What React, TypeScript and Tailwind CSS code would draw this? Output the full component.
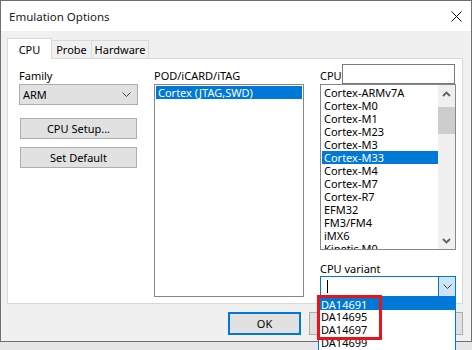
import React from "react";

const font = { fontFamily: '"Noto Sans", "Liberation Sans", sans-serif' };

function Chevron({ className = "" }: { className?: string }) {
  return (
    <svg width="9" height="5" viewBox="0 0 9 5" className={className}>
      <path d="M0.5 0.5 L4.5 4.5 L8.5 0.5" fill="none" stroke="#404040" strokeWidth="1" />
    </svg>
  );
}

function ScrollArrow({ up }: { up?: boolean }) {
  return (
    <svg width="9" height="6" viewBox="0 0 9 6">
      <path
        d={up ? "M1 5 L4.5 1.5 L8 5" : "M1 1 L4.5 4.5 L8 1"}
        fill="none"
        stroke="#606060"
        strokeWidth="1.8"
      />
    </svg>
  );
}

const cpus = [
  "Cortex-ARMv7A",
  "Cortex-M0",
  "Cortex-M1",
  "Cortex-M23",
  "Cortex-M3",
  "Cortex-M33",
  "Cortex-M4",
  "Cortex-M7",
  "Cortex-R7",
  "EFM32",
  "FM3/FM4",
  "iMX6",
  "Kinetis M0",
];

const variants = ["DA14691", "DA14695", "DA14697", "DA14699"];

export default function App() {
  return (
    <div
      className="relative w-[472px] h-[350px] overflow-hidden bg-[#e6e6e6] text-[11px] text-black leading-[13px]"
      style={font}
    >
      <div className="w-[472px] h-[342px] border border-[#6f6f6f] bg-[#f0f0f0] flex flex-col">
        {/* title bar */}
        <div className="h-[30px] bg-white flex items-center justify-between pl-[8px] pr-[9px] shrink-0">
          <span className="text-[11.5px] text-[#1a1a1a]">Emulation Options</span>
          <svg width="11" height="11" viewBox="0 0 11 11">
            <path d="M0.5 0.5 L10.5 10.5 M10.5 0.5 L0.5 10.5" stroke="#111" strokeWidth="1" />
          </svg>
        </div>

        {/* tabs */}
        <div className="pl-[6px] pt-[6px] flex items-end h-[27px] shrink-0">
          <div className="relative z-10 w-[45px] h-[21px] bg-white border border-b-0 border-[#d9d9d9] flex items-start justify-center pt-[4px] mb-[-1px]">
            CPU
          </div>
          <div className="w-[40px] h-[18px] bg-[#f0f0f0] border border-b-0 border-l-0 border-[#d9d9d9] flex items-center justify-center">
            Probe
          </div>
          <div className="w-[57px] h-[18px] bg-[#f0f0f0] border border-b-0 border-l-0 border-[#d9d9d9] flex items-center justify-center">
            Hardware
          </div>
        </div>

        {/* panel */}
        <div className="ml-[6px] w-[456px] h-[246px] bg-white border border-[#d9d9d9] flex pl-[11px] pt-[5px] gap-[16px] shrink-0">
          {/* col 1 */}
          <div className="w-[119px] flex flex-col">
            <div className="h-[20px] flex items-center pt-[2px]">Family</div>
            <div className="h-[21px] bg-[#e1e1e1] border border-[#adadad] flex items-center justify-between pl-[3px] pr-[6px]">
              <span>ARM</span>
              <Chevron />
            </div>
            <div className="mt-[13px] ml-[1px] w-[117px] h-[21px] bg-[#e1e1e1] border border-[#adadad] flex items-center justify-center">
              CPU Setup...
            </div>
            <div className="mt-[8px] ml-[1px] w-[117px] h-[21px] bg-[#e1e1e1] border border-[#adadad] flex items-center justify-center">
              Set Default
            </div>
          </div>

          {/* col 2 */}
          <div className="w-[150px] flex flex-col">
            <div className="h-[20px] flex items-center pt-[2px]">POD/iCARD/iTAG</div>
            <div className="h-[213px] border border-[#828790] p-[1px]">
              <div className="h-[13px] bg-[#0078d7] text-white pl-[2px] flex items-center">
                Cortex (JTAG,SWD)
              </div>
            </div>
          </div>

          {/* col 3 */}
          <div className="w-[136px] flex flex-col">
            <div className="h-[20px] flex items-center">
              <span className="w-[22px] pt-[2px]">CPU</span>
              <div className="w-[113px] h-[20px] border border-[#7a7a7a] bg-white" />
            </div>
            <div className="h-[166px] border border-[#828790] flex overflow-hidden">
              <div className="flex-1 flex flex-col pt-[1px] pl-[1px]">
                {cpus.map((c) => (
                  <div
                    key={c}
                    className={
                      c === "Cortex-M33"
                        ? "h-[13px] shrink-0 bg-[#0078d7] text-white pl-[2px] flex items-center"
                        : "h-[13px] shrink-0 pl-[2px] flex items-center"
                    }
                  >
                    {c}
                  </div>
                ))}
              </div>
              <div className="w-[17px] bg-[#f0f0f0] flex flex-col">
                <div className="h-[17px] flex items-center justify-center">
                  <ScrollArrow up />
                </div>
                <div className="mt-[5px] h-[27px] bg-[#cdcdcd]" />
                <div className="flex-1" />
                <div className="h-[17px] flex items-center justify-center">
                  <ScrollArrow />
                </div>
              </div>
            </div>
            <div className="h-[26px] flex items-end pb-[1px]">CPU variant</div>
            <div className="h-[21px] border border-[#0078d7] bg-white flex">
              <div className="flex-1 flex items-center pl-[6px]">
                <div className="w-[1px] h-[13px] bg-black" />
              </div>
              <div className="w-[17px] bg-[#cce4f7] border-l border-[#0078d7] flex items-center justify-center">
                <Chevron />
              </div>
            </div>
          </div>
        </div>

        {/* buttons */}
        <div className="flex justify-end gap-[8px] pr-[8px] pt-[8px]">
          <div className="w-[73px] h-[23px] bg-[#e1e1e1] border-2 border-[#0078d7] flex items-center justify-center">
            OK
          </div>
          <div className="w-[73px] h-[23px] bg-[#e1e1e1] border border-[#adadad] flex items-center justify-center">
            Cancel
          </div>
          <div className="w-[73px] h-[23px] bg-[#e1e1e1] border border-[#adadad] flex items-center justify-center">
            Help
          </div>
        </div>
      </div>

      {/* dropdown list overlay */}
      <div className="absolute left-[318px] top-[297px] w-[138px] h-[60px] bg-white border border-[#0078d7] flex flex-col">
        {variants.map((v, i) => (
          <div
            key={v}
            className={
              i === 0
                ? "h-[12px] shrink-0 bg-[#0078d7] text-white pl-[2px] flex items-center"
                : "h-[13px] shrink-0 pl-[2px] flex items-center"
            }
          >
            {v}
          </div>
        ))}
      </div>

      {/* red annotation */}
      <div className="absolute left-[317px] top-[295px] w-[65px] h-[45px] border-[3px] border-[#e8141b]" />
    </div>
  );
}
